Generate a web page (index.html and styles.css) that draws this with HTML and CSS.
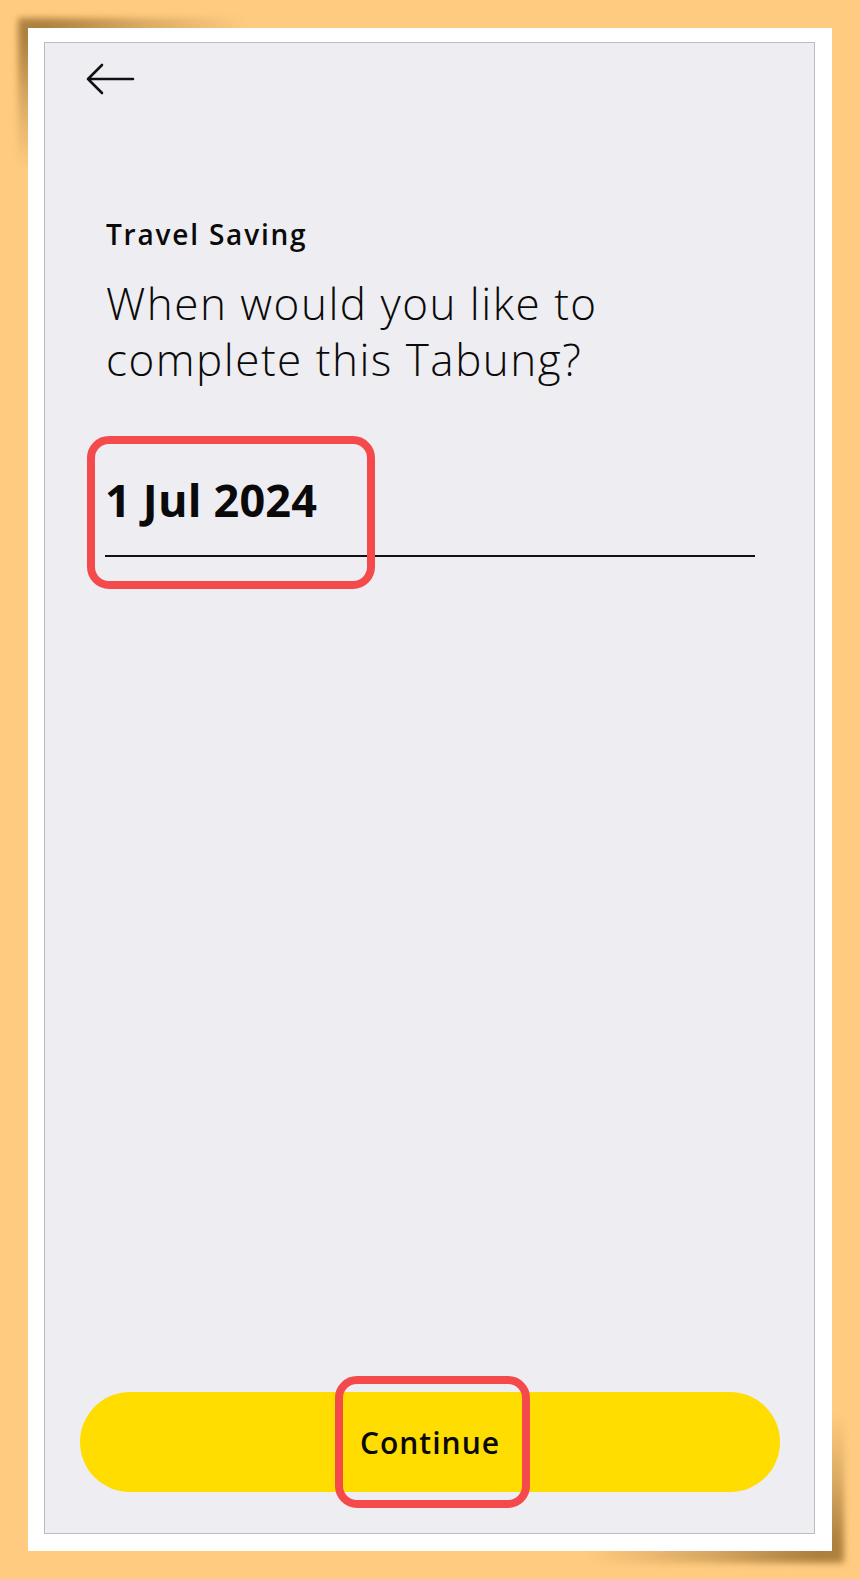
FILE: index.html
```html
<!DOCTYPE html>
<html lang="en">
<head>
<meta charset="utf-8">
<title>Travel Saving</title>
<link rel="stylesheet" href="styles.css">
</head>
<body>
<div class="frame">
  <div class="screen">
    <div class="topbar">
      <svg class="back" viewBox="0 0 50 34" width="50" height="34" aria-label="Back">
        <path d="M3 17 H48 M17 3 L3 17 L17 31" fill="none" stroke="#111" stroke-width="2.6" stroke-linecap="round" stroke-linejoin="round"/>
      </svg>
    </div>
    <div class="content">
      <div class="eyebrow">Travel Saving</div>
      <h1 class="question">When would you like to<br>complete this Tabung?</h1>
      <div class="datefield">
        <span class="datevalue">1 Jul 2024</span>
        <span class="highlight hl-date"></span>
      </div>
    </div>
    <div class="actions">
      <button class="continue">Continue<span class="highlight hl-btn"></span></button>
    </div>
  </div>
</div>
</body>
</html>
```

FILE: styles.css
```css
html, body {
  margin: 0;
  padding: 0;
}
body {
  background: #fecb80;
  width: 860px;
  height: 1579px;
  overflow: hidden;
  font-family: "Open Sans", "Liberation Sans", sans-serif;
  color: #0a0a0a;
}
.frame {
  position: relative;
  margin: 28px 0 0 28px;
  width: 804px;
  height: 1523px;
  background: #ffffff;
  box-sizing: border-box;
  padding: 14px 0 0 16px;
}
.frame::before {
  content: "";
  position: absolute;
  left: -10px;
  top: -10px;
  width: 230px;
  height: 150px;
  background: radial-gradient(ellipse at 8% 10%, rgba(110, 70, 10, 0.6) 0%, rgba(110, 70, 10, 0.25) 35%, rgba(110, 70, 10, 0) 70%);
  filter: blur(3px);
  z-index: -1;
}
.frame::after {
  content: "";
  position: absolute;
  right: -12px;
  bottom: -12px;
  width: 260px;
  height: 150px;
  background: radial-gradient(ellipse at 92% 90%, rgba(110, 70, 10, 0.6) 0%, rgba(110, 70, 10, 0.25) 35%, rgba(110, 70, 10, 0) 70%);
  filter: blur(3px);
  z-index: -1;
}
.screen {
  width: 771px;
  height: 1492px;
  box-sizing: border-box;
  background: #eeedf2;
  border: 1px solid #bdbcc0;
  display: flex;
  flex-direction: column;
}
.topbar {
  display: flex;
  padding: 19px 0 0 40px;
}
.back {
  display: block;
}
.content {
  display: flex;
  flex-direction: column;
  padding-left: 60px;
}
.eyebrow {
  margin-top: 121px;
  font-size: 28px;
  line-height: 34px;
  font-weight: 600;
  padding-left: 1px;
  letter-spacing: 1.8px;
}
.question {
  margin: 24px 0 0 0;
  font-size: 44px;
  line-height: 56px;
  font-weight: 300;
  padding-left: 1px;
  letter-spacing: 1.5px;
}
.datefield {
  position: relative;
  margin-top: 86px;
  width: 650px;
  padding-bottom: 28px;
  border-bottom: 2px solid #111;
}
.datevalue {
  display: block;
  font-size: 45px;
  line-height: 54px;
  font-weight: 700;
  letter-spacing: 0.2px;
}
.highlight {
  position: absolute;
  box-sizing: border-box;
  border: 8px solid #f44a4b;
  border-radius: 22px;
  pointer-events: none;
}
.hl-date {
  left: -18px;
  top: -37px;
  width: 288px;
  height: 153px;
}
.actions {
  margin-top: auto;
  padding: 0 0 41px 35px;
}
.continue {
  position: relative;
  display: flex;
  align-items: center;
  justify-content: center;
  width: 700px;
  height: 100px;
  border: none;
  border-radius: 50px;
  background: #ffdd00;
  font-family: "Open Sans", "Liberation Sans", sans-serif;
  font-size: 30px;
  font-weight: 600;
  color: #0a0a0a;
  padding: 0;
  letter-spacing: 1px;
}
.hl-btn {
  left: 255px;
  top: -16px;
  width: 195px;
  height: 132px;
}
```
